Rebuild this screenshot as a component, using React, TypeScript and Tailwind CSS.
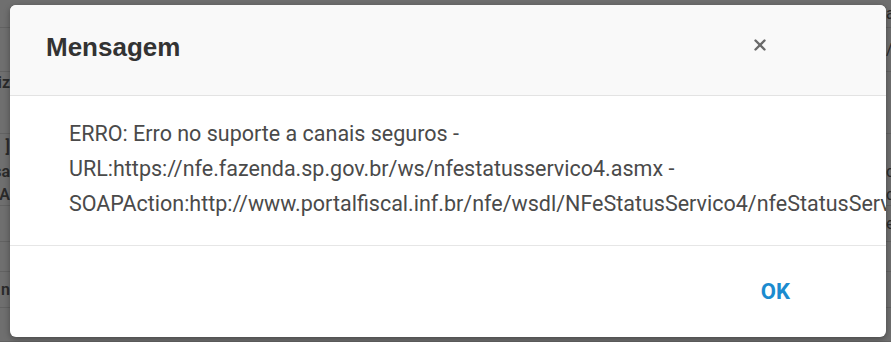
import { X } from 'lucide-react';

const rows = [
  { h: 'h-[28px]', left: '', right: 'a', line: true },
  { h: 'h-[44px]', left: '', right: '/', line: true },
  { h: 'h-[22px]', left: 'Realiz', right: '', line: false },
  { h: 'h-[40px]', left: '', right: '', line: true },
  { h: 'h-[26px]', left: '[', right: '', line: false },
  { h: 'h-[24px]', left: 'Pesquisa', right: 'c', line: false },
  { h: 'h-[22px]', left: 'PARA', right: 'c', line: true },
  { h: 'h-[36px]', left: '', right: 'e', line: true },
  { h: 'h-[30px]', left: '', right: '', line: true },
  { h: 'h-[36px]', left: 'Emitir n', right: '', line: true },
  { h: 'h-[34px]', left: '', right: '', line: true },
];

export default function App() {
  return (
    <div className="relative h-[342px] w-[891px] overflow-hidden bg-[#6f6f6f] font-['Roboto','Liberation_Sans',sans-serif]">
      {/* dimmed page behind the dialog */}
      <div className="flex flex-col">
        {rows.map((r, i) => (
          <div
            key={i}
            className={`${r.h} flex items-center justify-between ${r.line ? 'border-b border-[#626262]' : ''}`}
          >
            <span className="w-[10px] overflow-hidden whitespace-nowrap text-[16px] font-semibold text-[#2a2a2a] [direction:rtl]">
              {r.left}
            </span>
            <span className="w-[5px] overflow-hidden whitespace-nowrap text-[16px] text-[#2a2a2a]">{r.right}</span>
          </div>
        ))}
      </div>

      {/* dialog */}
      <div className="absolute left-[10px] top-[5px] flex h-[332px] w-[876px] flex-col overflow-hidden rounded-[6px] bg-white shadow-[0_2px_6px_rgba(0,0,0,0.35)]">
        <div className="flex h-[91px] shrink-0 items-center justify-between border-b border-[#e3e3e3] bg-[#f9f9f9] pl-[36px] pr-[117px]">
          <h2 className="mt-[-6px] font-['Liberation_Sans',Arial,sans-serif] text-[26px] font-bold text-[#333333]">
            Mensagem
          </h2>
          <button className="mt-[-10px] text-[#6a6a6a]" aria-label="Fechar">
            <X size={18} strokeWidth={3.2} />
          </button>
        </div>

        <div className="h-[150px] shrink-0 border-b border-[#e6e6e6] pl-[59px] pt-[20px] text-[21.5px] leading-[35px] text-[#4a4a4a]">
          <p className="whitespace-nowrap">ERRO: Erro no suporte a canais seguros -</p>
          <p className="whitespace-nowrap">URL:https://nfe.fazenda.sp.gov.br/ws/nfestatusservico4.asmx -</p>
          <p className="whitespace-nowrap">
            SOAPAction:http://www.portalfiscal.inf.br/nfe/wsdl/NFeStatusServico4/nfeStatusServico
          </p>
        </div>

        <div className="flex flex-1 items-center justify-end pr-[96px]">
          <button className="text-[22px] font-bold text-[#1b8bcf]">OK</button>
        </div>
      </div>
    </div>
  );
}
